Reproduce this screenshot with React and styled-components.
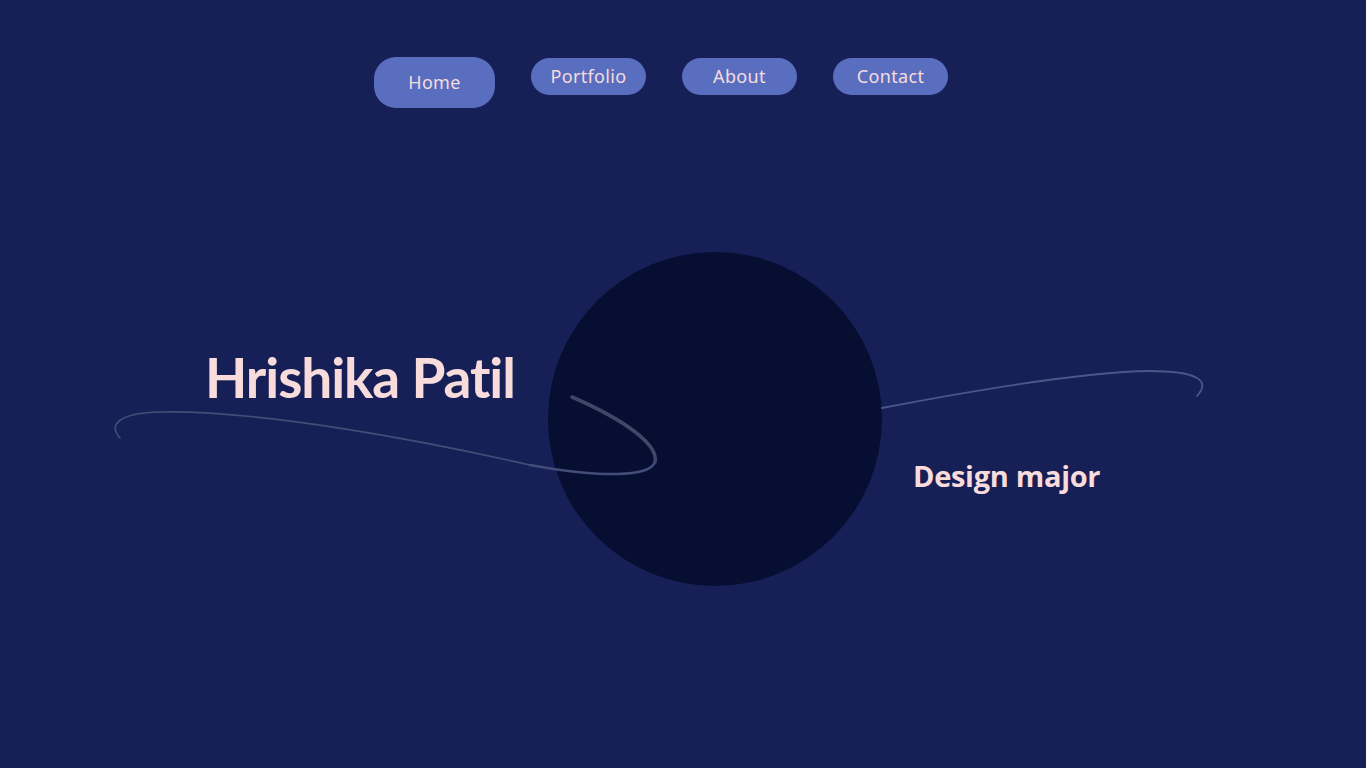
import React from "react";
import styled, { createGlobalStyle } from "styled-components";

const Global = createGlobalStyle`
  html, body { margin: 0; padding: 0; background: #162056; }
  body { font-family: "Open Sans", "Noto Sans", sans-serif; }
`;

const Page = styled.div`
  position: relative;
  width: 1366px;
  height: 768px;
  overflow: hidden;
  background: #162056;
`;

const Nav = styled.nav`
  display: flex;
  align-items: flex-start;
  justify-content: center;
  gap: 36px;
  padding: 57px 44px 0 0;
`;

const NavButton = styled.a`
  display: flex;
  align-items: center;
  justify-content: center;
  box-sizing: border-box;
  width: ${(p) => (p.$active ? 121 : 115)}px;
  height: ${(p) => (p.$active ? 51 : 37)}px;
  margin-top: ${(p) => (p.$active ? 0 : 1)}px;
  padding-bottom: 1px;
  border-radius: 22px;
  background: #5a6ec0;
  color: #f5dcdc;
  font-family: "Noto Sans", sans-serif;
  font-size: 18px;
  letter-spacing: 0.35px;
  text-decoration: none;
`;

const Hero = styled.section`
  display: grid;
  grid-template-columns: 343px 334px auto;
  padding: 144px 0 0 205px;
`;

const Name = styled.h1`
  margin: 98px 0 0;
  font-family: "Lato", sans-serif;
  font-weight: 700;
  font-size: 55px;
  line-height: 1;
  letter-spacing: -1.1px;
  font-variant-ligatures: none;
  color: #f8dcdc;
  white-space: nowrap;
`;

const Circle = styled.div`
  width: 334px;
  height: 334px;
  border-radius: 50%;
  background: #060e32;
`;

const Subtitle = styled.h2`
  margin: 209px 0 0 31px;
  font-family: "Open Sans", sans-serif;
  font-weight: 700;
  font-size: 29px;
  line-height: 1;
  letter-spacing: -0.3px;
  color: #f8dcdc;
  white-space: nowrap;
`;

const Swoosh = styled.svg`
  position: absolute;
  left: 0;
  top: 0;
  pointer-events: none;
`;

export default function App() {
  return (
    <Page>
      <Global />
      <Nav>
        <NavButton $active href="#">Home</NavButton>
        <NavButton href="#">Portfolio</NavButton>
        <NavButton href="#">About</NavButton>
        <NavButton href="#">Contact</NavButton>
      </Nav>
      <Hero>
        <Name>Hrishika Patil</Name>
        <Circle />
        <Subtitle>Design major</Subtitle>
      </Hero>
      <Swoosh width="1366" height="768" viewBox="0 0 1366 768">
        <g fill="none" stroke="#434e78" strokeLinecap="round">
          <path d="M120 438 C 108 425, 118 413, 160 412 C 260 410, 420 440, 530 465" strokeWidth="1.6" />
          <path d="M530 465 C 600 478, 650 477, 655 462" strokeWidth="2.4" />
          <path d="M655 462 C 659 445, 625 420, 572 397" strokeWidth="3.6" stroke="#3e4866" />
          <path d="M882 408 C 960 393, 1080 372, 1150 371 C 1195 371, 1212 380, 1197 396" strokeWidth="1.8" stroke="#4a5788" />
        </g>
      </Swoosh>
    </Page>
  );
}
